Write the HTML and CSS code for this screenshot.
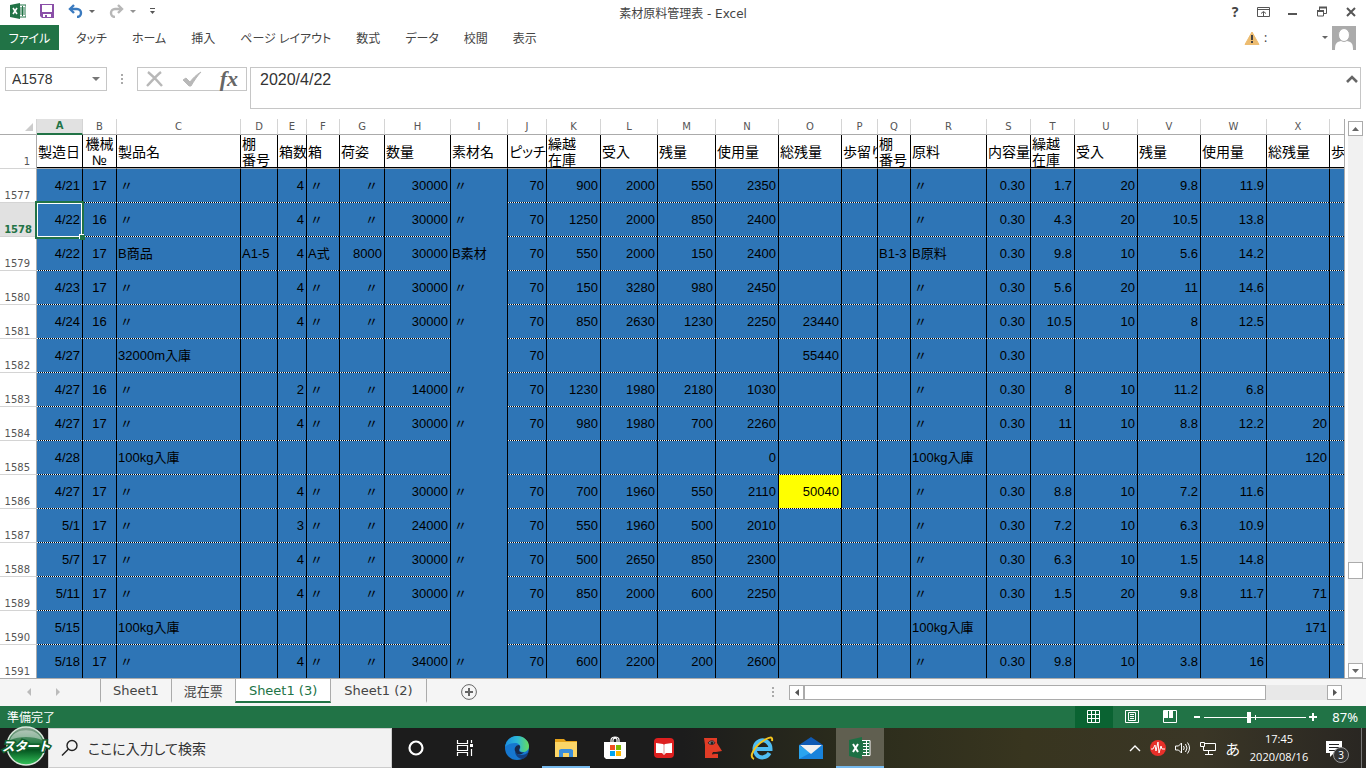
FILE: index.html
```html
<!DOCTYPE html>
<html lang="ja">

<head>
    <meta charset="UTF-8">
    <meta name="viewport" content="width=device-width, initial-scale=1.0">
    <title>素材原料管理表 - Excel</title>
    <link rel="stylesheet" href="styles.css">
</head>

<body>
    <header class="titlebar">
        <div class="quick">
            <svg width="16" height="16" viewBox="0 0 16 16">
                <path d="M9 2h7v12H9z" fill="#fff" stroke="#217346" />
                <path d="M10 5h5M10 7h5M10 9h5M10 11h5M12.500 3v10" stroke="#217346" />
                <path d="M0 2l10-2v16L0 14z" fill="#217346" />
                <path d="M3 5l4 6M7 5l-4 6" stroke="#fff" stroke-width="1.600" />
            </svg>
            <button aria-label="上書き保存"><svg width="14" height="14" viewBox="0 0 14 14">
                <path d="M0 0h14v14H2l-2-2z" fill="#8a4fa8" />
                <path d="M2 1h10v7H2zM3 10h8v3H3z" fill="#fff" />
                <path d="M5 11h2v2H5z" fill="#8a4fa8" />
            </svg></button>
            <div class="pair">
                <button aria-label="元に戻す"><svg width="15" height="14" viewBox="0 0 15 14">
                    <path d="M2 5h7a4 4 0 0 1 0 8" fill="none" stroke="#3a7abf" stroke-width="2.400" />
                    <path d="M6 1L2 5l4 4" fill="none" stroke="#3a7abf" stroke-width="2.400" />
                </svg></button>
                <span class="down"></span>
            </div>
            <div class="pair faded">
                <button aria-label="やり直し"><svg width="15" height="14" viewBox="0 0 15 14">
                    <path d="M13 5H6a4 4 0 0 0 0 8" fill="none" stroke="#999" stroke-width="2.400" />
                    <path d="M9 1l4 4-4 4" fill="none" stroke="#999" stroke-width="2.400" />
                </svg></button>
                <span class="down"></span>
            </div>
            <button aria-label="クイックアクセスのカスタマイズ"><svg width="5" height="7" viewBox="0 0 5 7">
                <path d="M0 .5h5" stroke="#555" />
                <path d="M0 3h5L2.500 6z" fill="#555" />
            </svg></button>
        </div>
        <div class="title">素材原料管理表 - Excel</div>
        <div class="winbtns">
            <button class="help">?</button>
            <button aria-label="リボンの表示オプション"><svg width="14" height="12" viewBox="0 0 14 12">
                <path d="M.5 1.500h12v9H.5zM.5 3.500h12" fill="none" stroke="#555" />
                <path d="M6.500 10V6M4 7.500l2.500-2 2.500 2" fill="none" stroke="#555" />
            </svg></button>
            <button aria-label="最小化"><svg width="14" height="12"><path d="M2 7h9v2H2z" fill="#555" /></svg></button>
            <button aria-label="元に戻す (縮小)"><svg width="14" height="12" viewBox="0 0 14 12">
                <path d="M4.500 4V1.500h7v6H9" fill="none" stroke="#555" />
                <path d="M4 1.500h8" stroke="#555" stroke-width="2" />
                <path d="M2.500 5h6v5h-6z" fill="none" stroke="#555" />
                <path d="M2 5h7" stroke="#555" stroke-width="2" />
            </svg></button>
            <button aria-label="閉じる"><svg width="14" height="12" viewBox="0 0 14 12">
                <path d="M3 2l8 8M11 2l-8 8" stroke="#555" stroke-width="2" />
            </svg></button>
        </div>
    </header>

    <nav class="ribbon">
        <button class="file">ファイル</button>
        <div class="tabs">
            <button>タッチ</button>
            <button>ホーム</button>
            <button>挿入</button>
            <button>ページ レイアウト</button>
            <button>数式</button>
            <button>データ</button>
            <button>校閲</button>
            <button>表示</button>
        </div>
        <div class="account">
            <svg width="16" height="14" viewBox="0 0 16 14">
                <path d="M8 1l7 12.500H1z" fill="#edbc70" stroke="#edbc70" stroke-linejoin="round" />
                <path d="M7 4h2v5H7zM7 10h2v2H7z" fill="#444" />
            </svg>
            <span class="user">:</span>
            <span class="down"></span>
            <svg width="24" height="24" viewBox="0 0 24 24">
                <path d="M0 0h24v24H0z" fill="#ababab" />
                <path d="M3 24c0-6 1-8 6-9h6c5 1 6 3 6 9z" fill="#fff" />
                <ellipse cx="12" cy="9" rx="5.500" ry="6.500" fill="#fff" stroke="#ababab" />
            </svg>
        </div>
    </nav>

    <div class="formula">
        <div class="namebox">
            <input type="text" value="A1578" aria-label="名前ボックス">
            <button aria-label="名前の一覧"><span class="down big"></span></button>
        </div>
        <span class="dots"></span>
        <div class="fxbox">
            <button aria-label="キャンセル"><svg width="18" height="18" viewBox="0 0 18 18">
                <path d="M2 2c5 4 9 8 14 14M15 2C10 6 6 11 1 16" fill="none" stroke="#b8b8b8" stroke-width="2.400" />
            </svg></button>
            <button aria-label="入力"><svg width="20" height="18" viewBox="0 0 20 18">
                <path d="M1 10l3-2 4 4C11 8 14 5 19 2c-4 4-7 9-10 14H7z" fill="#b8b8b8" stroke="#b8b8b8" />
            </svg></button>
            <button class="fx" aria-label="関数の挿入"><i>fx</i></button>
        </div>
        <div class="fbar">
            <input type="text" value="2020/4/22" aria-label="数式バー">
            <button aria-label="数式バーの折りたたみ"><svg width="12" height="8" viewBox="0 0 12 8">
                <path d="M1 7l5-5 5 5" fill="none" stroke="#666" stroke-width="2.600" />
            </svg></button>
        </div>
    </div>

    <main class="sheet">
        <div class="grid">
            <table>
                <colgroup id="cols"></colgroup>
                <thead id="head"></thead>
                <tbody id="body"></tbody>
            </table>
        </div>
        <div class="vscroll">
            <button aria-label="上へ"><svg width="7" height="4"><path d="M0 4h7L3.500 0z" fill="#666" /></svg></button>
            <div class="vtrack"></div>
            <div class="vthumb"></div>
            <div class="vtrack end"></div>
            <button aria-label="下へ"><svg width="7" height="4"><path d="M0 0h7L3.500 4z" fill="#666" /></svg></button>
        </div>
    </main>

    <div class="sheetbar">
        <div class="arrows">
            <svg width="4" height="8"><path d="M4 0v8L0 4z" fill="#bbb" /></svg>
            <svg width="4" height="8"><path d="M0 0v8l4-4z" fill="#bbb" /></svg>
        </div>
        <button class="stab">Sheet1</button>
        <button class="stab">混在票</button>
        <button class="stab on">Sheet1 (3)</button>
        <button class="stab last">Sheet1 (2)</button>
        <button class="add" aria-label="新しいシート"><svg width="16" height="16" viewBox="0 0 16 16">
            <circle cx="8" cy="8" r="7.400" fill="none" stroke="#666" />
            <path d="M4 8h8M8 4v8" stroke="#666" stroke-width="2" />
        </svg></button>
        <span class="dots"></span>
        <div class="hscroll">
            <button aria-label="左へ"><svg width="4" height="7"><path d="M4 0v7L0 3.500z" fill="#555" /></svg></button>
            <div class="hthumb"></div>
            <div class="htrack"></div>
            <button aria-label="右へ"><svg width="4" height="7"><path d="M0 0v7l4-3.500z" fill="#555" /></svg></button>
        </div>
    </div>

    <div class="status">
        <span class="ready">準備完了</span>
        <button class="view on" aria-label="標準"><svg width="14" height="14" viewBox="0 0 14 14">
            <path d="M.5 .5h12v12H.5zM4.500 0v13M8.500 0v13M0 4.500h13M0 8.500h13" fill="none" stroke="#fff" />
        </svg></button>
        <button class="view" aria-label="ページ レイアウト"><svg width="14" height="14" viewBox="0 0 14 14">
            <path d="M.5 .5h13v12H.5zM3.500 2.500h7v8h-7zM5 4.500h4M5 6.500h4M5 8.500h4" fill="none" stroke="#fff" />
        </svg></button>
        <button class="view" aria-label="改ページ プレビュー"><svg width="14" height="14" viewBox="0 0 14 14">
            <path d="M.5 .5h13v12H.5z" fill="none" stroke="#fff" />
            <path d="M1 1h4v7H1zM6 1h4v7H6z" fill="#fff" />
        </svg></button>
        <div class="zoom">
            <button aria-label="縮小"><svg width="8" height="8"><path d="M1 3h6v2H1z" fill="#fff" /></svg></button>
            <input type="range" min="0" max="100" value="44" aria-label="ズーム">
            <button aria-label="拡大"><svg width="8" height="8"><path d="M0 3h8v2H0zM3 0h2v8H3z" fill="#fff" /></svg></button>
        </div>
        <span class="percent">87%</span>
    </div>

    <footer class="taskbar">
        <button class="start" aria-label="スタート"><svg width="54" height="42" viewBox="0 0 54 42">
            <defs>
                <linearGradient id="ball" x1="0" y1="0" x2="0" y2="1">
                    <stop offset="0" stop-color="#8fa595" />
                    <stop offset=".45" stop-color="#1f7a40" />
                    <stop offset=".6" stop-color="#03541f" />
                    <stop offset="1" stop-color="#35c45b" />
                </linearGradient>
            </defs>
            <circle cx="26" cy="20" r="19" fill="url(#ball)" stroke="#d9e8dc" stroke-width="1.500" />
            <path d="M10 14c4-13 28-13 32 0-9-4-23-4-32 0z" fill="#fff" opacity=".4" />
            <text class="starttext" x="26" y="25" text-anchor="middle">スタート</text>
        </svg></button>
        <label class="search">
            <svg width="18" height="18" viewBox="0 0 18 18">
                <circle cx="11" cy="6.500" r="5" fill="none" stroke="#222" stroke-width="1.400" />
                <path d="M7.500 10L1 16.500" stroke="#222" stroke-width="1.400" />
            </svg>
            <input type="text" placeholder="ここに入力して検索">
        </label>
        <div class="apps">
            <button aria-label="Cortana"><svg width="16" height="16" viewBox="0 0 16 16">
                <circle cx="8" cy="8" r="6.500" fill="none" stroke="#fff" stroke-width="2.200" />
            </svg></button>
            <button class="taskview" aria-label="タスク ビュー"><svg width="18" height="16" viewBox="0 0 18 16">
                <path d="M1.500 0v3.500h10V0M1.500 16v-3.500h10V16M1.500 5.500h10v5h-10zM15.500 0v3M15.500 9v7" fill="none" stroke="#fff" stroke-width="1.200" />
                <path d="M14 4h3v3h-3z" fill="#fff" />
            </svg></button>
            <button aria-label="Edge"><svg width="24" height="24" viewBox="0 0 24 24">
                <defs>
                    <linearGradient id="edge" x1="0" y1="0" x2="1" y2="0">
                        <stop offset="0" stop-color="#1b8fe0" />
                        <stop offset=".5" stop-color="#2cb7d8" />
                        <stop offset="1" stop-color="#66dd5c" />
                    </linearGradient>
                </defs>
                <circle cx="12" cy="12" r="12" fill="#1677cf" />
                <path d="M24 15c-2 3-5 4-8 4 -3 0-5-2-6-4 0 4 3 8 8 8 2-1 3-2 4-3z" fill="#123f80" />
                <path d="M0 11C1 4 6 0 12 0c7 0 12 5 12 10 0 4-3 6-6 6-2 0-4-1-3-3 1-3-1-6-5-6-5 0-8 2-10 4z" fill="url(#edge)" />
                <path d="M10 15c-1-3 1-6 4-6 2 1 1 3 0 5 0 2 3 3 5 2-2 3-7 4-9-1z" fill="#16294a" />
            </svg></button>
            <button class="open" aria-label="エクスプローラー"><svg width="22" height="18" viewBox="0 0 22 18">
                <path d="M0 0h9l2 2h11v16H0z" fill="#e5a21a" />
                <path d="M0 3h22v15H0z" fill="#fbd567" />
                <path d="M4 18v-7l2-1h10l2 1v7h-4v-4H8v4z" fill="#3b8edb" />
            </svg></button>
            <button aria-label="Microsoft Store"><svg width="24" height="24" viewBox="0 0 24 24">
                <path d="M8 7V4c0-4 8-4 8 0v3M10 7V4c0-2 4-3 4 0v3" fill="none" stroke="#fff" stroke-width="1.200" />
                <path d="M1 6h22v15l-2 2H3l-2-2z" fill="#fff" />
                <path d="M7 9h5v5H7z" fill="#f25022" />
                <path d="M13 9h5v5h-5z" fill="#7fba00" />
                <path d="M7 15h5v5H7z" fill="#00a4ef" />
                <path d="M13 15h5v5h-5z" fill="#ffb900" />
            </svg></button>
            <button aria-label="辞書"><svg width="20" height="20" viewBox="0 0 20 20">
                <rect width="20" height="20" rx="4" fill="#dd1f1f" />
                <path d="M2 5l7 1 1 1 1-1 7-1v10l-6 0-2 2-2-2-6 0z" fill="#fff" />
                <path d="M10 7v9" stroke="#d99" />
            </svg></button>
            <button aria-label="フェイス"><svg width="20" height="22" viewBox="0 0 20 22">
                <path d="M1 1h13v5l5 8-6 1-3 0-1 2 6 0v4H2V8z" fill="#e13c26" />
                <path d="M5 6c2-3 6-3 7 0-2 2-5 2-7 0z" fill="#7a8b90" stroke="#4b2020" />
                <circle cx="9" cy="6" r="1.500" fill="#222" />
                <path d="M9 17l6-1" stroke="#4b2020" />
            </svg></button>
            <button aria-label="Internet Explorer"><svg width="24" height="24" viewBox="0 0 24 24">
                <path d="M6 13h14.500a8 8.500 0 1 0-1 4" fill="none" stroke="#4fbdf2" stroke-width="4" />
                <path d="M4 23c-6-2 1-13 9-18 6-4 10-5 9 0" fill="none" stroke="#f5c51c" stroke-width="2" />
            </svg></button>
            <button aria-label="メール"><svg width="24" height="22" viewBox="0 0 24 22">
                <path d="M0 8l12-8 12 8v14H0z" fill="#0f5ab4" />
                <path d="M0 8l12 8 12-8v14H0z" fill="#2aa4ee" />
                <path d="M0 22l13-7 11-7v14z" fill="#1883dc" />
                <path d="M1 8h22l-11 9z" fill="#f0f0f0" />
            </svg></button>
            <button class="open now" aria-label="Excel"><svg width="22" height="22" viewBox="0 0 22 22">
                <path d="M13 3.500h8v15h-8" fill="#217346" stroke="#fff" />
                <path d="M14 6.500h6M14 9.500h6M14 12.500h6M14 15.500h6M17.500 4v14" stroke="#fff" />
                <path d="M0 3l13-3v22L0 19z" fill="#1d7044" />
                <path d="M4 7l5 8M9 7l-5 8" stroke="#fff" stroke-width="2" />
            </svg></button>
        </div>
        <div class="tray">
            <svg width="12" height="8" viewBox="0 0 12 8"><path d="M1 7l5-5 5 5" fill="none" stroke="#fff" stroke-width="1.400" /></svg>
            <svg width="16" height="16" viewBox="0 0 16 16">
                <circle cx="8" cy="8" r="8" fill="#e8302a" />
                <path d="M1 9h2l2-4 1 6 2-9 1 11 2-7 1 3h3" fill="none" stroke="#fff" />
            </svg>
            <svg width="16" height="14" viewBox="0 0 16 14">
                <path d="M.5 5h3l3-3v10l-3-3h-3zM8.500 5q1.500 2 0 4M10.500 3q3 4 0 8M12.500 1.500q4 5.500 0 11" fill="none" stroke="#fff" />
            </svg>
            <svg width="16" height="14" viewBox="0 0 16 14">
                <path d="M5 2.500h10.500v7H3.500V6M.5 1.500h4v4h-4zM8.500 10v3M5 13.500h8" fill="none" stroke="#fff" />
            </svg>
            <span class="ime">あ</span>
            <div class="clock">
                <div>17:45</div>
                <div>2020/08/16</div>
            </div>
            <button class="notice" aria-label="通知">
                <svg width="18" height="17" viewBox="0 0 18 17">
                    <path d="M1 1h16v12H9l-4 4v-4H1z" fill="#fff" />
                    <path d="M4 4.500h10M4 7.500h10M4 10.500h6" stroke="#222" />
                </svg>
                <span class="badge">3</span>
            </button>
        </div>
        <button class="peek" aria-label="デスクトップの表示"></button>
    </footer>

    <script src="script.js"></script>
</body>

</html>
```
FILE: styles.css
```css
* {
    box-sizing: border-box;
}

body {
    margin: 0;
    height: 100vh;
    display: flex;
    flex-direction: column;
    overflow: hidden;
    background-color: white;
    color: #444;
    font-family: "Noto Sans", "Noto Sans CJK JP", sans-serif;
    font-size: 12px;
    font-feature-settings: "palt";
}

button {
    display: flex;
    align-items: center;
    justify-content: center;
    padding: 0;
    border: none;
    background: none;
    color: inherit;
    font: inherit;
    font-feature-settings: inherit;
    white-space: nowrap;
}

input {
    min-width: 0;
    padding: 0;
    border: none;
    outline: none;
    background: none;
    color: #333;
    font-family: "Liberation Sans", sans-serif;
}

svg {
    display: block;
    flex: none;
}

.down {
    border: 3px solid transparent;
    border-top-color: #666;
    border-bottom: none;
}

.down.big {
    border-width: 4px 4px 0;
    border-top-color: #777;
}

.dots {
    width: 2px;
    height: 10px;
    background: repeating-linear-gradient(#aaa 0 2px, transparent 2px 4px);
}

/* タイトルバー */
.titlebar {
    display: grid;
    grid-template-columns: 1fr auto 1fr;
    height: 25px;
    align-items: center;
}

.title {
    font-family: "DejaVu Sans", "Noto Sans CJK JP", sans-serif;
}

.quick {
    display: flex;
    align-items: center;
    gap: 14px;
    padding-left: 10px;
    padding-bottom: 3px;
}

.pair {
    display: flex;
    align-items: center;
    gap: 6px;
}

.faded {
    opacity: 0.7;
}

.winbtns {
    display: flex;
    justify-content: flex-end;
    gap: 15px;
    padding-right: 8px;
    padding-bottom: 2px;
}

.winbtns button {
    width: 14px;
}

.help {
    font-size: 14px;
    line-height: 16px;
    font-weight: bold;
}

/* リボン */
.ribbon {
    display: flex;
    height: 25px;
}

.file {
    width: 59px;
    background-color: #217346;
    color: white;
}

.tabs {
    display: flex;
    gap: 25px;
    flex: 1;
    padding-left: 17px;
}

.account {
    display: flex;
    align-items: center;
    gap: 4px;
    padding-right: 10px;
}

.user {
    width: 54px;
}

/* 数式バー */
.formula {
    display: flex;
    padding: 17px 5px 10px;
}

.formula .dots {
    margin: 7px 14px 0;
}

.namebox {
    display: flex;
    width: 102px;
    height: 24px;
    padding: 0 6px;
    border: 1px solid #c6c6c6;
}

.namebox input {
    flex: 1;
    font-size: 14px;
}

.fxbox {
    display: flex;
    justify-content: space-between;
    width: 110px;
    height: 24px;
    padding: 0 8px;
    border: 1px solid #c6c6c6;
}

.fx {
    font: bold 22px/20px "Liberation Serif", serif;
    color: #666;
}

.fbar {
    display: flex;
    flex: 1;
    align-items: flex-start;
    height: 42px;
    margin-left: 3px;
    padding: 3px 2px 0 9px;
    border: 1px solid #c6c6c6;
}

.fbar input {
    flex: 1;
    font-size: 16px;
    line-height: 18px;
}

.fbar button {
    height: 16px;
}

/* シート */
.sheet {
    display: flex;
    flex: 1;
    min-height: 0;
}

.grid {
    flex: 1;
    min-width: 0;
    overflow: hidden;
    border-right: 1px solid #ababab;
}

table {
    width: 0;
    table-layout: fixed;
    border-collapse: separate;
    border-spacing: 0;
    color: black;
    font-family: "Liberation Sans", "Noto Sans CJK JP", sans-serif;
    font-size: 13px;
}

th,
td {
    height: 34px;
    padding: 0 2px;
    overflow: hidden;
    white-space: nowrap;
    font-weight: normal;
    line-height: 16px;
}

.letters th {
    height: 16px;
    padding: 0;
    border-right: 1px solid #d4d4d4;
    border-bottom: 1px solid #ababab;
    color: #555;
    font-family: "DejaVu Sans", sans-serif;
    font-size: 10px;
    line-height: 14px;
}

.letters .active {
    border-bottom: 2px solid #217346;
    background-color: #e1e1e1;
    color: #217346;
    font-weight: bold;
}

.corner svg {
    margin-left: auto;
    margin-right: 3px;
}

.names td {
    padding: 0 0 0 1px;
    border-right: 1px solid black;
    border-bottom: 1px solid #ababab;
    box-shadow: inset 0 -1px black;
    font-size: 14px;
}

.num {
    padding: 0 6px 0 0;
    border-right: 1px solid #ababab;
    border-bottom: 1px solid #d4d4d4;
    color: #555;
    font-family: "DejaVu Sans", sans-serif;
    font-size: 10px;
    line-height: 12px;
    text-align: right;
    vertical-align: bottom;
}

.num.active {
    padding-right: 4px;
    background-color: #e1e1e1;
    color: #217346;
    font-weight: bold;
}

tbody td {
    border-right: 1px solid black;
    background: repeating-linear-gradient(90deg, white 0 1px, black 1px 2px) bottom / 100% 1px no-repeat #2e75b6;
    text-align: right;
}

tbody .left {
    padding-left: 1px;
    text-align: left;
}

tbody .ditto {
    padding: 0 6px 0 3px;
}

tbody .plain {
    background: #2e75b6;
}

.names .center,
tbody .center {
    padding: 0;
    text-align: center;
}

tbody .inset {
    padding-right: 5px;
}

tbody .yellow {
    background-color: yellow;
}

.picked {
    position: relative;
    overflow: visible;
    box-shadow: inset 0 0 0 1px white;
}

.picked::before {
    content: "";
    position: absolute;
    inset: -2px;
    border: 2px solid #217346;
}

.picked::after {
    content: "";
    position: absolute;
    right: -3px;
    bottom: -3px;
    width: 5px;
    height: 5px;
    background-color: #217346;
    box-shadow: -1px -1px white;
}

.vscroll {
    display: flex;
    flex-direction: column;
    width: 21px;
    padding: 2px 3px 0;
}

.vscroll button,
.hscroll button {
    width: 15px;
    height: 15px;
    border: 1px solid #ababab;
    background-color: white;
}

.vtrack {
    flex: 427;
    background-color: #f1f1f1;
}

.vtrack.end {
    flex: 84;
}

.vthumb {
    height: 17px;
    border: 1px solid #ababab;
    background-color: white;
}

/* シート見出し */
.sheetbar {
    display: flex;
    align-items: flex-start;
    height: 28px;
    padding-right: 24px;
    border-top: 1px solid #ababab;
    background-color: #f5f5f5;
    font-family: "DejaVu Sans", "Noto Sans CJK JP", sans-serif;
    font-size: 13px;
}

.arrows {
    display: flex;
    gap: 25px;
    width: 100px;
    padding: 9px 0 0 27px;
}

.stab {
    height: 24px;
    padding: 0 12px;
    border-left: 1px solid #ababab;
    border-bottom: 2px solid transparent;
}

.stab.on {
    border-right: 1px solid #ababab;
    border-bottom-color: #217346;
    background-color: white;
    color: #217346;
}

.stab.last {
    border-left: none;
    border-right: 1px solid #ababab;
}

.stab.on,
.stab.last {
    padding: 0 13px;
}

.add {
    margin: 5px auto 0 34px;
}

.sheetbar .dots {
    margin: 8px 15px 0 0;
}

.hscroll {
    display: flex;
    width: 42%;
    max-width: 553px;
    flex: none;
    margin-top: 6px;
}

.hthumb {
    flex: 462;
    border: 1px solid #ababab;
    background-color: white;
}

.htrack {
    flex: 61;
    background-color: #e8e8e8;
}

/* ステータスバー */
.status {
    display: flex;
    align-items: center;
    height: 22px;
    padding-right: 8px;
    background-color: #217346;
    color: white;
}

.ready {
    flex: 1;
    padding-left: 7px;
}

.view {
    width: 38px;
    height: 22px;
}

.view.on {
    background-color: #0a6332;
}

.zoom {
    display: flex;
    align-items: center;
    gap: 3px;
    margin-left: 4px;
}

.zoom input {
    width: 102px;
    height: 12px;
    margin: 0;
    appearance: none;
    background: linear-gradient(white, white) 51px 50% / 1px 5px no-repeat,
        linear-gradient(white, white) center / 100% 1px no-repeat;
}

.zoom input::-webkit-slider-thumb {
    appearance: none;
    width: 4px;
    height: 11px;
    background-color: white;
}

.percent {
    margin-left: auto;
    padding-left: 15px;
    font-size: 13px;
}

/* タスクバー */
.taskbar {
    display: flex;
    height: 40px;
    background: linear-gradient(90deg, #1c1c1c 50%, #2b2c1c 62%, #38351f 75%, #3a3626 88%, #292622);
    color: white;
}

.start {
    position: relative;
    width: 48px;
}

.start svg {
    position: absolute;
    left: 0;
    bottom: 0;
    z-index: 1;
}

.starttext {
    fill: white;
    stroke: #11602c;
    stroke-width: 3px;
    paint-order: stroke;
    font-size: 13px;
    font-weight: bold;
    font-style: italic;
}

.search {
    display: flex;
    align-items: center;
    gap: 9px;
    width: 344px;
    padding-left: 12px;
    background-color: #f2f2f2;
    border: 1px solid #ccc;
}

.search input {
    flex: 1;
    font-family: "Noto Sans", "Noto Sans CJK JP", sans-serif;
    font-size: 14px;
    font-feature-settings: "palt";
}

.search input::placeholder {
    color: #333;
}

.apps {
    display: flex;
    flex: 1;
    gap: 1px;
}

.apps button {
    width: 48px;
    height: 40px;
}

.apps .taskview {
    margin-right: 3px;
}

.apps .open {
    box-shadow: inset 0 -2px #76b9ed;
}

.apps .now {
    background-color: #605f50;
}

.tray {
    display: flex;
    align-items: center;
    gap: 9px;
    padding-right: 18px;
}

.ime {
    font-size: 15px;
}

.clock {
    width: 60px;
    font-family: "Open Sans", sans-serif;
    font-size: 11px;
    line-height: 18px;
    text-align: center;
}

.notice {
    position: relative;
    margin-left: 7px;
}

.badge {
    position: absolute;
    left: 8px;
    top: 7px;
    width: 16px;
    height: 16px;
    border: 1px solid #999;
    border-radius: 50%;
    background-color: #333;
    font-size: 10px;
    line-height: 14px;
}

.peek {
    width: 5px;
    border-left: 1px solid #777;
}
```
FILE: script.js
```js
// 列幅 (先頭は行番号)
const widths = [37, 46, 34, 124, 37, 29, 33, 45, 66, 57, 39, 54, 57, 58, 63, 63, 36, 33, 76, 44, 44, 63, 63, 66, 63, 63];
const letters = 'ABCDEFGHIJKLMNOPQRSTUVWX'.split('');
const names = ['製造日', '機械<br>№', '製品名', '棚<br>番号', '箱数', '箱', '荷姿', '数量', '素材名', 'ピッチ', '繰越<br>在庫', '受入', '残量', '使用量', '総残量', '歩留り', '棚<br>番号', '原料', '内容量', '繰越<br>在庫', '受入', '残量', '使用量', '総残量', '歩留り'];

const rows = [
    '4/21|17|〃||4|〃|〃|30000|〃|70|900|2000|550|2350||||〃|0.30|1.7|20|9.8|11.9||',
    '4/22|16|〃||4|〃|〃|30000|〃|70|1250|2000|850|2400||||〃|0.30|4.3|20|10.5|13.8||',
    '4/22|17|B商品|A1-5|4|A式|8000|30000|B素材|70|550|2000|150|2400|||B1-3|B原料|0.30|9.8|10|5.6|14.2||',
    '4/23|17|〃||4|〃|〃|30000|〃|70|150|3280|980|2450||||〃|0.30|5.6|20|11|14.6||',
    '4/24|16|〃||4|〃|〃|30000|〃|70|850|2630|1230|2250|23440|||〃|0.30|10.5|10|8|12.5||',
    '4/27||32000m入庫|||||||70|||||55440|||〃|0.30||||||',
    '4/27|16|〃||2|〃|〃|14000|〃|70|1230|1980|2180|1030||||〃|0.30|8|10|11.2|6.8||',
    '4/27|17|〃||4|〃|〃|30000|〃|70|980|1980|700|2260||||〃|0.30|11|10|8.8|12.2|20|',
    '4/28||100kg入庫|||||||||||0||||100kg入庫||||||120|',
    '4/27|17|〃||4|〃|〃|30000|〃|70|700|1960|550|2110|50040|||〃|0.30|8.8|10|7.2|11.6||',
    '5/1|17|〃||3|〃|〃|24000|〃|70|550|1960|500|2010||||〃|0.30|7.2|10|6.3|10.9||',
    '5/7|17|〃||4|〃|〃|30000|〃|70|500|2650|850|2300||||〃|0.30|6.3|10|1.5|14.8||',
    '5/11|17|〃||4|〃|〃|30000|〃|70|850|2000|600|2250||||〃|0.30|1.5|20|9.8|11.7|71|',
    '5/15||100kg入庫|||||||||||||||100kg入庫||||||171|',
    '5/18|17|〃||4|〃|〃|34000|〃|70|600|2200|200|2600||||〃|0.30|9.8|10|3.8|16||'
];

document.getElementById('cols').innerHTML = widths.map(w => `<col style="width: ${w}px">`).join('');

let head = '<tr class="letters"><th class="corner"><svg width="8" height="8"><path d="M8 0v8H0z" fill="#ccc"/></svg></th>';
letters.forEach((l, i) => {
    head += `<th class="${i === 0 ? 'active' : ''}">${l}</th>`;
});
head += '<th></th></tr><tr class="names"><th class="num">1</th>';
names.forEach((n, i) => {
    head += `<td class="${i === 1 ? 'center' : ''}">${n}</td>`;
});
document.getElementById('head').innerHTML = head + '</tr>';

// 左揃えの列: C D F I Q R
const leftCols = [2, 3, 5, 8, 16, 17];

let body = '';
rows.forEach((row, r) => {
    const no = 1577 + r;
    body += `<tr><th class="num ${no === 1578 ? 'active' : ''}">${no}</th>`;
    row.split('|').forEach((text, c) => {
        const cls = [];
        if (leftCols.includes(c)) cls.push('left');
        if (c === 1) cls.push('center');
        if (c === 8) cls.push('plain');
        if (c === 18) cls.push('inset');
        if (text === '〃') cls.push('ditto');
        if (no === 1578 && c === 0) cls.push('picked');
        if (no === 1586 && c === 14) cls.push('yellow');
        body += `<td class="${cls.join(' ')}">${text}</td>`;
    });
    body += '</tr>';
});
document.getElementById('body').innerHTML = body;
```
